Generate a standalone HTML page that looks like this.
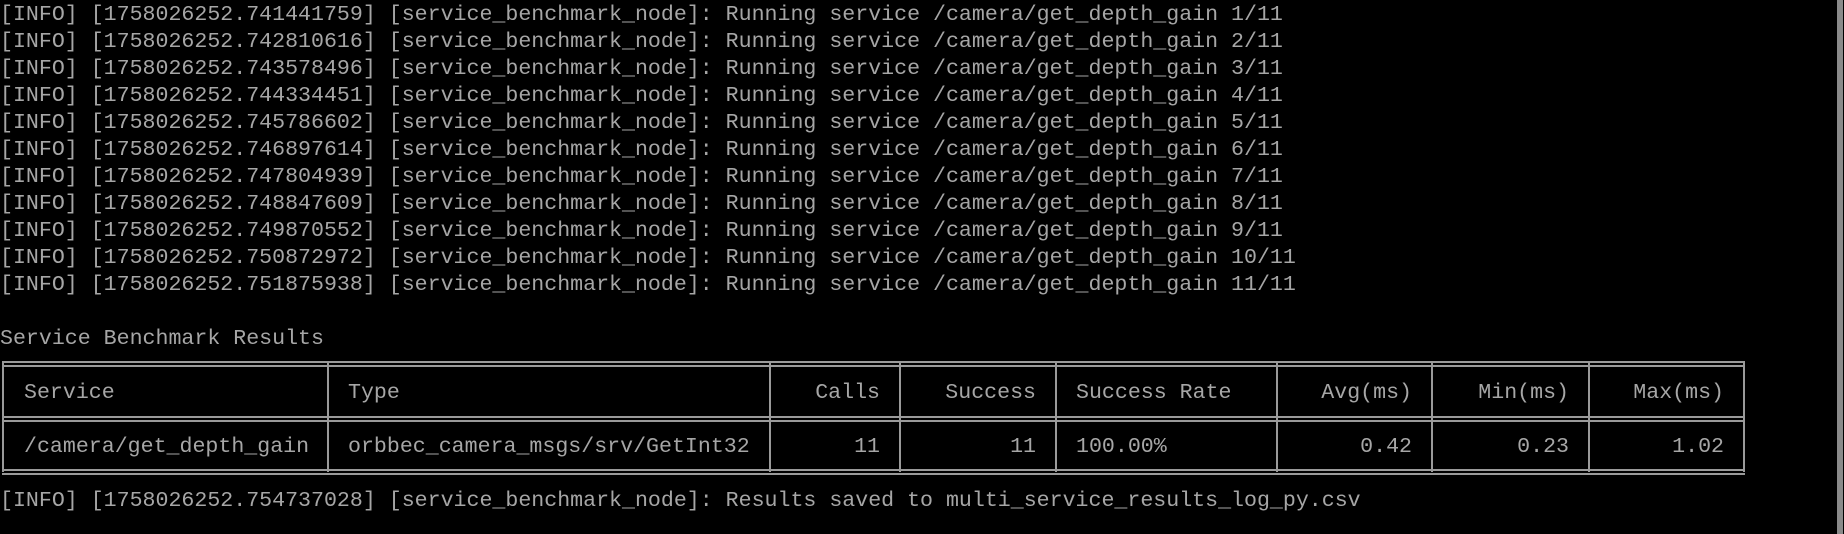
<!DOCTYPE html>
<html><head><meta charset="utf-8"><style>
html,body{margin:0;padding:0;background:#000;width:1844px;height:534px;overflow:hidden;position:relative}
.t{position:absolute;left:0;font-family:"Liberation Mono","DejaVu Sans Mono",monospace;font-size:21.6px;color:#a6a6a6;white-space:pre;line-height:27px}
.h{position:absolute;height:2px;background:#9a9a9a}
.v{position:absolute;width:2px;background:#9a9a9a;top:363px;height:109px}
.c{position:absolute;font-family:"Liberation Mono","DejaVu Sans Mono",monospace;font-size:21.6px;color:#a6a6a6;white-space:pre;line-height:27px}
</style></head><body>
<div class="t" style="top:2px">[INFO] [1758026252.741441759] [service_benchmark_node]: Running service /camera/get_depth_gain 1/11
[INFO] [1758026252.742810616] [service_benchmark_node]: Running service /camera/get_depth_gain 2/11
[INFO] [1758026252.743578496] [service_benchmark_node]: Running service /camera/get_depth_gain 3/11
[INFO] [1758026252.744334451] [service_benchmark_node]: Running service /camera/get_depth_gain 4/11
[INFO] [1758026252.745786602] [service_benchmark_node]: Running service /camera/get_depth_gain 5/11
[INFO] [1758026252.746897614] [service_benchmark_node]: Running service /camera/get_depth_gain 6/11
[INFO] [1758026252.747804939] [service_benchmark_node]: Running service /camera/get_depth_gain 7/11
[INFO] [1758026252.748847609] [service_benchmark_node]: Running service /camera/get_depth_gain 8/11
[INFO] [1758026252.749870552] [service_benchmark_node]: Running service /camera/get_depth_gain 9/11
[INFO] [1758026252.750872972] [service_benchmark_node]: Running service /camera/get_depth_gain 10/11
[INFO] [1758026252.751875938] [service_benchmark_node]: Running service /camera/get_depth_gain 11/11</div>
<div class="t" style="top:326px">Service Benchmark Results</div>
<div class="h" style="left:2px;width:1743px;top:361px"></div>
<div class="h" style="left:2px;width:1743px;top:365px"></div>
<div class="h" style="left:2px;width:1743px;top:416px"></div>
<div class="h" style="left:2px;width:1743px;top:420px"></div>
<div class="h" style="left:2px;width:1743px;top:469px"></div>
<div class="h" style="left:2px;width:1743px;top:473px"></div>
<div class="v" style="left:2px"></div>
<div class="v" style="left:327px"></div>
<div class="v" style="left:769px"></div>
<div class="v" style="left:899px"></div>
<div class="v" style="left:1055px"></div>
<div class="v" style="left:1276px"></div>
<div class="v" style="left:1431px"></div>
<div class="v" style="left:1588px"></div>
<div class="v" style="left:1743px"></div>

<div class="c" style="top:380px;left:24px">Service</div>
<div class="c" style="top:380px;left:348px">Type</div>
<div class="c" style="top:380px;right:964px">Calls</div>
<div class="c" style="top:380px;right:808px">Success</div>
<div class="c" style="top:380px;left:1076px">Success Rate</div>
<div class="c" style="top:380px;right:432px">Avg(ms)</div>
<div class="c" style="top:380px;right:275px">Min(ms)</div>
<div class="c" style="top:380px;right:120px">Max(ms)</div>

<div class="c" style="top:434px;left:24px">/camera/get_depth_gain</div>
<div class="c" style="top:434px;left:348px">orbbec_camera_msgs/srv/GetInt32</div>
<div class="c" style="top:434px;right:964px">11</div>
<div class="c" style="top:434px;right:808px">11</div>
<div class="c" style="top:434px;left:1076px">100.00%</div>
<div class="c" style="top:434px;right:432px">0.42</div>
<div class="c" style="top:434px;right:275px">0.23</div>
<div class="c" style="top:434px;right:120px">1.02</div>

<div class="t" style="top:488px">[INFO] [1758026252.754737028] [service_benchmark_node]: Results saved to multi_service_results_log_py.csv</div>
<div style="position:absolute;left:1837px;top:0;width:6px;height:534px;background:#8a8a8a"></div>
</body></html>
